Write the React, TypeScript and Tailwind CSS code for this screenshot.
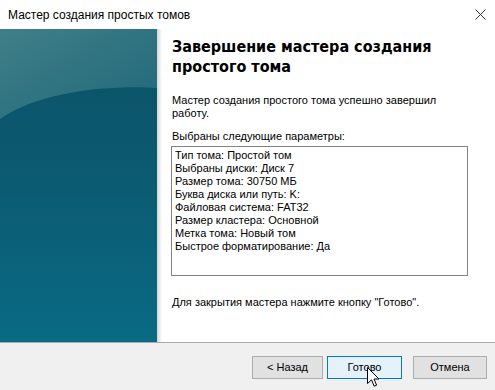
import React from "react";

const params = [
  "Тип тома: Простой том",
  "Выбраны диски: Диск 7",
  "Размер тома: 30750 МБ",
  "Буква диска или путь: K:",
  "Файловая система: FAT32",
  "Размер кластера: Основной",
  "Метка тома: Новый том",
  "Быстрое форматирование: Да",
];

function SidePanel() {
  return (
    <svg width="157" height="313" viewBox="0 0 157 313" className="block">
      <defs>
        <linearGradient id="base" x1="0" y1="0" x2="0" y2="1">
          <stop offset="0" stopColor="#0c5266" />
          <stop offset="0.5" stopColor="#0b5b72" />
          <stop offset="1" stopColor="#0a6a84" />
        </linearGradient>
        <linearGradient id="top" x1="0" y1="0" x2="1" y2="1">
          <stop offset="0" stopColor="#3f7f88" />
          <stop offset="1" stopColor="#21687a" />
        </linearGradient>
      </defs>
      <rect width="157" height="313" fill="url(#base)" />
      <path d="M0 0 H157 V59 C110 56 40 62 0 90 Z" fill="url(#top)" />
    </svg>
  );
}

function Cursor() {
  return (
    <svg
      width="13"
      height="21"
      viewBox="0 0 13 21"
      className="absolute left-[367px] top-[367px]"
    >
      <path
        d="M0.5 0.5 L0.5 16.5 L4.5 12.8 L7.2 19.2 L9.6 18.2 L7 12 L12 12 Z"
        fill="#fff"
        stroke="#000"
        strokeWidth="1"
        strokeLinejoin="miter"
      />
    </svg>
  );
}

export default function App() {
  return (
    <div
      className="relative w-[495px] h-[390px] bg-white flex flex-col overflow-hidden text-black"
      style={{ fontFamily: '"Liberation Sans", Arial, sans-serif' }}
    >
      <div className="h-[29px] flex items-center justify-between pl-[8px] pr-[9px] shrink-0">
        <span className="text-[12px] leading-none">Мастер создания простых томов</span>
        <svg width="11" height="11" viewBox="0 0 11 11">
          <path d="M0.5 0.5 L10.5 10.5 M10.5 0.5 L0.5 10.5" stroke="#333" strokeWidth="1" />
        </svg>
      </div>
      <div className="h-[313px] flex shrink-0">
        <div className="w-[157px] shrink-0">
          <SidePanel />
        </div>
        <div className="w-[5px] shrink-0 bg-gradient-to-r from-[#d6d6d6] to-white" />
        <div className="flex flex-col pl-[10px] pt-[8px] w-[333px]">
          <div
            className="text-[16px] leading-[20px] font-bold"
            style={{ fontFamily: '"DejaVu Sans Condensed", "DejaVu Sans", Verdana, sans-serif' }}
          >
            Завершение мастера создания
            <br />
            простого тома
          </div>
          <p className="mt-[17px] w-[297px] text-[11px] leading-[13px]">
            Мастер создания простого тома успешно завершил работу.
          </p>
          <p className="mt-[10px] text-[11px] leading-[13px]">Выбраны следующие параметры:</p>
          <div className="mt-[3px] -ml-[1px] w-[297px] h-[130px] border border-[#828282] pl-[3px] pt-[2px] text-[11px] leading-[13px]">
            {params.map((p) => (
              <div key={p}>{p}</div>
            ))}
          </div>
          <p className="mt-[20px] text-[11px] leading-[13px]">
            Для закрытия мастера нажмите кнопку "Готово".
          </p>
        </div>
      </div>
      <div className="h-px bg-[#a9a9a9] shrink-0" />
      <div className="flex-1 bg-[#f0f0f0] flex items-start pt-[13px] pl-[252px]">
        <button className="w-[71px] h-[23px] bg-[#e1e1e1] border border-[#adadad] text-[11px]">
          &lt; Назад
        </button>
        <button className="ml-[4px] w-[75px] h-[23px] bg-[#e5f1fb] border border-[#0078d7] text-[11px]">
          Готово
        </button>
        <button className="ml-[11px] w-[74px] h-[23px] bg-[#e1e1e1] border border-[#adadad] text-[11px]">
          Отмена
        </button>
      </div>
      <Cursor />
    </div>
  );
}
